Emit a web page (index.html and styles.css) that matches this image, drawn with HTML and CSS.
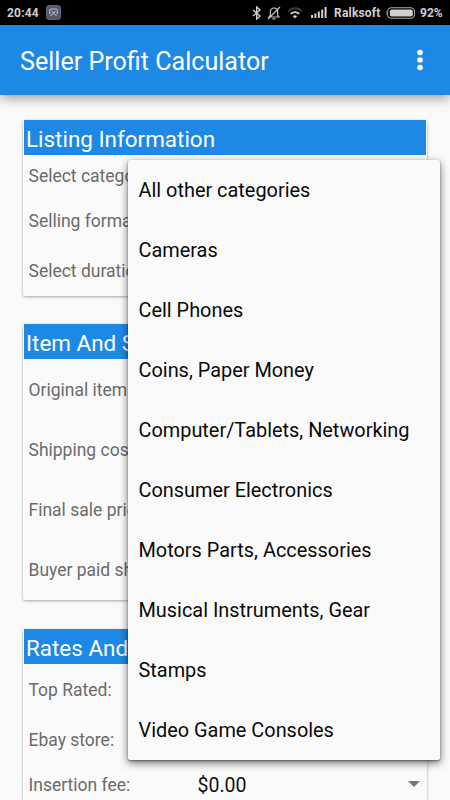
FILE: index.html
```html
<!DOCTYPE html>
<html lang="en">
<head>
<meta charset="utf-8">
<title>Seller Profit Calculator</title>
<link rel="stylesheet" href="styles.css">
</head>
<body>
<div class="status">
  <span class="clock">20:44</span>
  <svg class="app-badge" width="15" height="15" viewBox="0 0 15 15"><rect x=".5" y=".5" width="14" height="14" rx="2.500" fill="#555b6e" stroke="#5f6579"/><path d="M4.300 9.300C3.300 8.500 3.500 4 4.500 4h6c1 0 1.200 4.500.2 5.300" fill="none" stroke="#c0c4d0" stroke-width="1"/><path d="M4.500 11l3-3 3 3M5.500 6l2 2 2-2" fill="none" stroke="#c9ccd6" stroke-width="1"/></svg>
  <div class="indicators">
    <svg class="bt" width="10" height="14" viewBox="0 0 10 14"><path d="M1 4l7 6-3.300 3V1L8 4l-7 6" fill="none" stroke="#d0d0d0" stroke-width="1.400"/></svg>
    <svg class="bell" width="14" height="14" viewBox="0 0 14 14"><path d="M2 11h10l-1.300-1.700V6C10.700 3.500 9 2 7 2S3.300 3.500 3.300 6v3.300zM1 13L13 1M5.500 12.800h3" fill="none" stroke="#c4c4c4" stroke-width="1.200"/></svg>
    <svg class="wifi" width="16" height="12" viewBox="0 0 16 12"><path d="M1 4.300C5 .2 11 .2 15 4.300" fill="none" stroke="#3c3c3c" stroke-width="1.800"/><path d="M3.700 6.900c2.500-2.500 6.100-2.500 8.600 0" fill="none" stroke="#d0d0d0" stroke-width="1.800"/><path d="M5.800 9.200c1.300-1.200 3.100-1.200 4.400 0L8 11.500z" fill="#d0d0d0"/></svg>
    <svg class="signal" width="16" height="11" viewBox="0 0 16 11"><path d="M0 8h2v3H0zM3.400 6.500h2V11h-2zM6.800 4.500h2V11h-2zM10.200 2.500h2V11h-2zM13.600 0h2v11h-2z" fill="#d0d0d0"/></svg>
    <span class="carrier">Ralksoft</span>
    <svg class="battery" width="31" height="12" viewBox="0 0 31 12"><rect x="2.500" y=".7" width="27" height="10.600" rx="4" fill="none" stroke="#b0b0b0" stroke-width="1.100"/><path d="M2.500 3Q0 6 2.500 9" fill="#777"/><rect x="4.800" y="2.400" width="23" height="7.200" rx="2" fill="#d0d0d0"/></svg>
    <span class="percent">92%</span>
  </div>
</div>
<header class="appbar">
  <h1>Seller Profit Calculator</h1>
  <svg width="6" height="22" viewBox="0 0 6 22"><g fill="#fff"><circle cx="3" cy="3.500" r="2.800"/><circle cx="3" cy="11" r="2.800"/><circle cx="3" cy="18.500" r="2.800"/></g></svg>
</header>
<main class="content">
  <section class="card listing">
    <h2>Listing Information</h2>
    <div class="row"><span>Select category:</span></div>
    <div class="row"><span>Selling format:</span></div>
    <div class="row"><span>Select duration:</span></div>
  </section>
  <section class="card costs">
    <h2>Item And Shipping</h2>
    <div class="row"><span>Original item cost:</span></div>
    <div class="row"><span>Shipping cost:</span></div>
    <div class="row"><span>Final sale price:</span></div>
    <div class="row"><span>Buyer paid shipping:</span></div>
  </section>
  <section class="card rates">
    <h2>Rates And Fees</h2>
    <div class="row"><span>Top Rated:</span></div>
    <div class="row"><span>Ebay store:</span></div>
    <div class="row"><span class="label">Insertion fee:</span><span class="value">$0.00</span><i class="caret"></i></div>
  </section>
</main>
<ul class="menu">
  <li>All other categories</li>
  <li>Cameras</li>
  <li>Cell Phones</li>
  <li>Coins, Paper Money</li>
  <li>Computer/Tablets, Networking</li>
  <li>Consumer Electronics</li>
  <li>Motors Parts, Accessories</li>
  <li>Musical Instruments, Gear</li>
  <li>Stamps</li>
  <li>Video Game Consoles</li>
</ul>
</body>
</html>
```

FILE: styles.css
```css
* { box-sizing: border-box; }
body {
  margin: 0;
  height: 800px;
  overflow: hidden;
  position: relative;
  background: #fafafa;
  font-family: Roboto, sans-serif;
}
.status {
  display: flex;
  align-items: center;
  height: 25px;
  padding: 0 8px 0 7px;
  background: #000;
  color: #d0d0d0;
  font-size: 12px;
  font-weight: 700;
}
.clock { width: 39px; letter-spacing: .2px; }
.indicators { display: flex; align-items: center; margin-left: auto; }
.bell { margin-left: 5px; }
.wifi { margin-left: 6px; }
.signal { margin-left: 8px; }
.carrier { margin-left: 7px; width: 51px; letter-spacing: .2px; }
.battery { margin-right: 4px; }
.percent { width: 22px; }
.appbar {
  display: flex;
  align-items: center;
  justify-content: space-between;
  position: relative;
  height: 70px;
  padding: 0 27px 0 20px;
  background: #1e88e5;
  color: #fff;
  box-shadow: 0 3px 12px rgba(0, 0, 0, .4);
}
h1, h2 { margin: 0; font-weight: 400; white-space: nowrap; }
h1 { padding-top: 4px; font-size: 25.100px; line-height: 30px; }
.content {
  display: flex;
  flex-direction: column;
  padding: 25px 23px 0;
}
.card {
  flex: none;
  padding: 0 1px;
  border-radius: 2px;
  box-shadow: 0 1px 3px rgba(0, 0, 0, .35);
}
h2 {
  height: 35px;
  padding-left: 2px;
  background: #1e88e5;
  color: #fff;
  font-size: 22.450px;
  line-height: 38px;
}
.row {
  display: flex;
  align-items: center;
  height: 60px;
  padding-left: 4.500px;
  color: #6b6b6b;
  font-size: 17.500px;
  white-space: nowrap;
}
.listing { height: 176px; margin-bottom: 28px; }
.listing .row:nth-child(2) { height: 41px; }
.listing .row:nth-child(3) { height: 49px; }
.listing .row:nth-child(4) { height: 51px; }
.costs { height: 276px; margin-bottom: 29px; }
.costs .row { padding-top: 2px; }
.rates .row:nth-child(2) { height: 52px; }
.rates .row:nth-child(3) { height: 48px; }
.rates .row:nth-child(4) { height: 42px; }
.label { width: 169px; }
.value { color: #111; font-size: 19.500px; }
.caret {
  margin: 0 6px 2px auto;
  border: 6px solid transparent;
  border-top: 6px solid #757575;
  border-bottom: 0;
}
.menu {
  position: absolute;
  left: 128px;
  top: 160px;
  width: 312px;
  height: 600px;
  margin: 0;
  padding: 0;
  list-style: none;
  background: #fafafa;
  border-radius: 2px;
  box-shadow: 0 3px 8px rgba(0, 0, 0, .55), 0 1px 2px rgba(0, 0, 0, .4);
}
.menu li {
  height: 60px;
  padding-left: 10.500px;
  color: #0a0a0a;
  font-size: 19.900px;
  line-height: 62px;
  white-space: nowrap;
}
```
